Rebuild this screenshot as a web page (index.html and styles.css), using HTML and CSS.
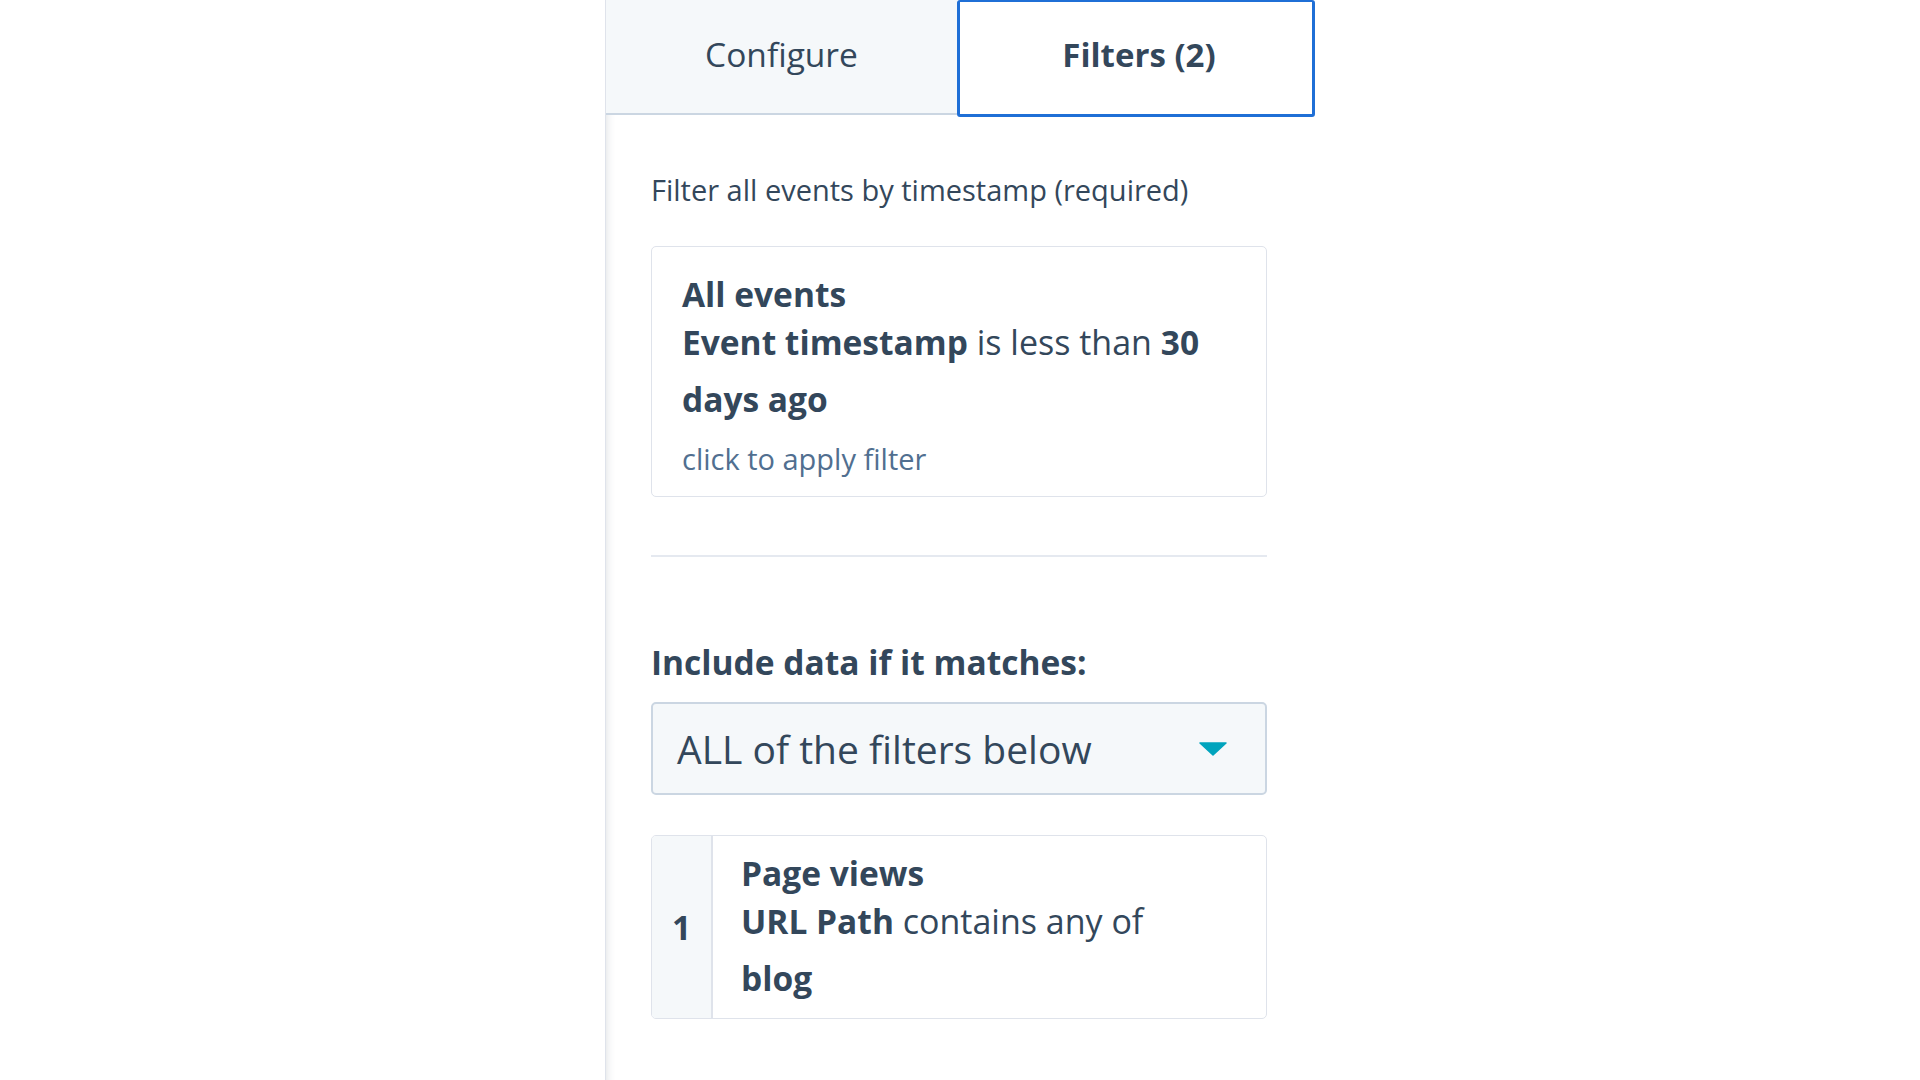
FILE: index.html
```html
<!DOCTYPE html>
<html lang="en">
<head>
<meta charset="utf-8">
<title>Filters</title>
<link rel="stylesheet" href="styles.css">
</head>
<body>
<div class="page">
  <div class="gutter"></div>
  <aside class="sidebar">
    <div class="tabs">
      <div class="tab tab-inactive">Configure</div>
      <div class="tab tab-active">Filters (2)</div>
    </div>
    <div class="content">
      <p class="desc">Filter all events by timestamp (required)</p>
      <div class="card card-ts">
        <div class="card-title">All events</div>
        <div class="cond"><strong>Event timestamp</strong> is less than <strong>30</strong> <strong>days ago</strong></div>
        <div class="apply">click to apply filter</div>
      </div>
      <hr class="divider">
      <div class="label">Include data if it matches:</div>
      <div class="select">
        <span class="select-text">ALL of the filters below</span>
        <svg class="caret" width="28" height="14" viewBox="0 0 28 14"><path d="M1 1 L27 1 L14 13 Z" fill="#00a4bd" stroke="#00a4bd" stroke-width="1.5" stroke-linejoin="round"/></svg>
      </div>
      <div class="filter">
        <div class="num">1</div>
        <div class="filter-body">
          <div class="card-title">Page views</div>
          <div class="cond"><strong>URL Path</strong> contains any of</div>
          <div class="cond"><strong>blog</strong></div>
        </div>
      </div>
    </div>
  </aside>
  <div class="rest"></div>
</div>
</body>
</html>
```

FILE: styles.css
```css
* { box-sizing: border-box; }
html, body { margin: 0; padding: 0; background: #ffffff; }
body {
  font-family: "Open Sans", "Noto Sans", sans-serif;
  color: #33475b;
  width: 1920px;
  height: 1080px;
  overflow: hidden;
}
.page {
  display: grid;
  grid-template-columns: 605px 710px 1fr;
  height: 1080px;
}
.sidebar {
  border-left: 1px solid #dfe3eb;
  box-shadow: inset 10px 0 10px -10px rgba(45, 62, 80, 0.18);
  height: 1080px;
  display: flex;
  flex-direction: column;
}
.tabs {
  display: flex;
  align-items: flex-start;
  height: 115px;
}
.tab {
  display: flex;
  align-items: center;
  justify-content: center;
  font-size: 33.5px;
  height: 115px;
  padding-bottom: 6px;
}
.tab-inactive {
  width: 351px;
  background: #f5f8fa;
  border-bottom: 2px solid #cbd6e2;
  color: #33475b;
}
.tab-active {
  position: relative;
  width: 358px;
  height: 117px;
  background: #ffffff;
  border: 3px solid #1f6fd6;
  border-top-width: 2px;
  border-radius: 3px;
  font-weight: 700;
  font-size: 33px;
  color: #33475b;
  padding-bottom: 8px;
  padding-left: 6px;
}
.content {
  padding: 57px 48px 0 45px;
}
.desc {
  margin: 0;
  font-size: 29px;
  line-height: 36px;
  color: #33475b;
}
.card {
  margin-top: 38px;
  border: 1px solid #dfe3eb;
  border-radius: 5px;
  background: #ffffff;
}
.card-ts {
  height: 251px;
  padding: 28px 30px 0 30px;
}
.card-title {
  font-size: 33.5px;
  line-height: 39px;
  font-weight: 700;
}
.cond {
  font-size: 34px;
  line-height: 57px;
}
.cond strong { font-weight: 700; font-size: 33.5px; }
.apply {
  margin-top: 11px;
  font-size: 29px;
  line-height: 40px;
  color: #516f90;
}
.divider {
  margin: 58px 0 0 0;
  border: 0;
  border-top: 2px solid #e5e9f0;
  height: 0;
}
.label {
  margin-top: 85px;
  font-size: 33.5px;
  line-height: 40px;
  font-weight: 700;
}
.select {
  margin-top: 20px;
  height: 93px;
  background: #f5f8fa;
  border: 2px solid #cbd6e2;
  border-radius: 5px;
  display: flex;
  align-items: center;
  justify-content: space-between;
  padding: 0 38px 0 24px;
}
.select-text {
  font-size: 39px;
  line-height: 48px;
  color: #33475b;
}
.caret { display: block; margin-top: 0; }
.filter {
  margin-top: 40px;
  height: 184px;
  border: 1px solid #dfe3eb;
  border-radius: 5px;
  display: flex;
  overflow: hidden;
}
.num {
  width: 61px;
  background: #f5f8fa;
  border-right: 2px solid #dfe3eb;
  display: flex;
  align-items: center;
  justify-content: center;
  font-size: 33.5px;
  font-weight: 700;
  padding-top: 0;
}
.filter-body {
  padding: 18px 28px 0 28px;
}
```
